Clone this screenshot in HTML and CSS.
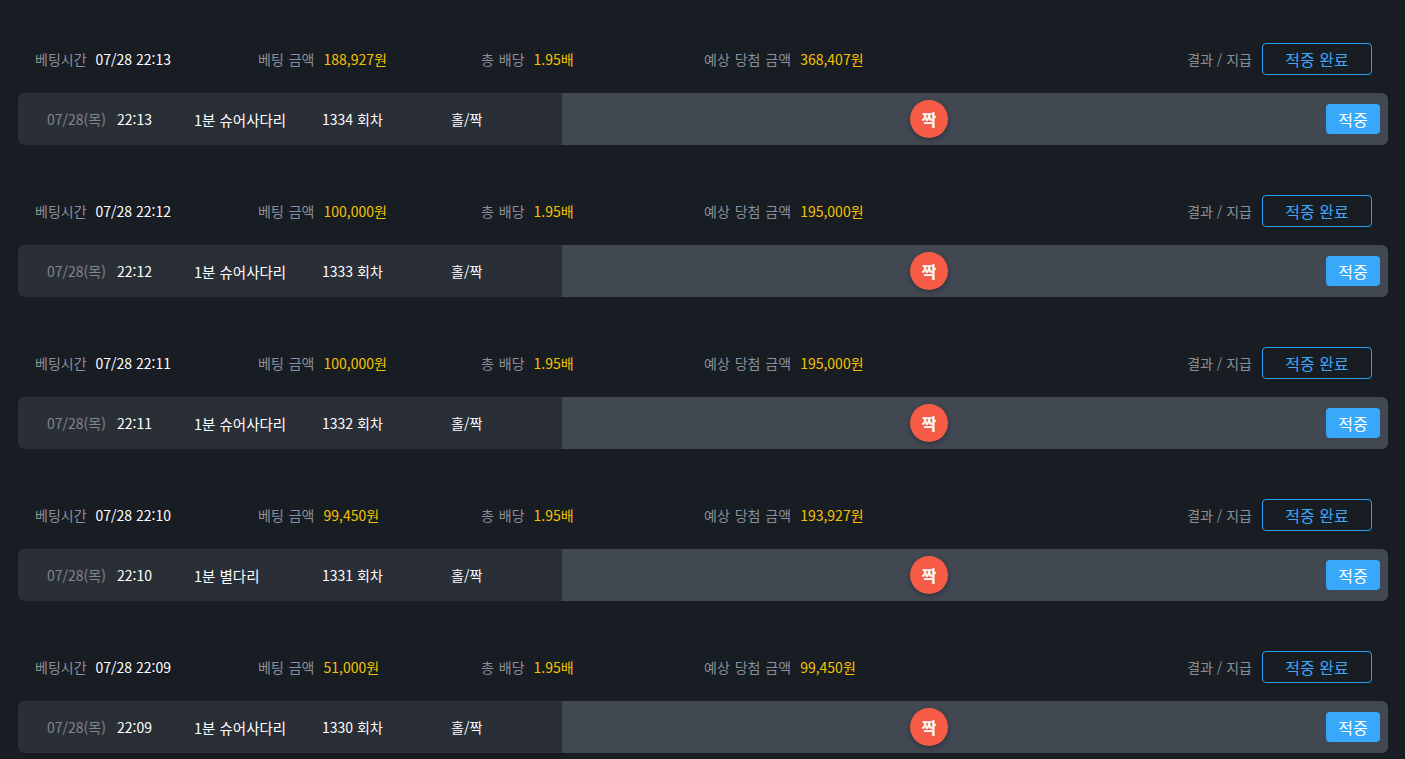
FILE: index.html
```html
<!DOCTYPE html>
<html lang="ko">
<head>
<meta charset="utf-8">
<link rel="stylesheet" href="styles.css">
</head>
<body>
<div class="list">
  <section class="bet">
    <div class="bet-head">
      <div class="col"><span class="lbl">베팅시간</span><span class="val">07/28 22:13</span></div>
      <div class="col"><span class="lbl">베팅 금액</span><span class="val gold">188,927원</span></div>
      <div class="col"><span class="lbl">총 배당</span><span class="val gold">1.95배</span></div>
      <div class="col"><span class="lbl">예상 당첨 금액</span><span class="val gold">368,407원</span></div>
      <div class="result"><span class="lbl">결과 / 지급</span><span class="done">적중 완료</span></div>
    </div>
    <div class="bet-row">
      <div class="info">
        <span class="c-date">07/28(목)</span><span class="c-time">22:13</span><span class="c-game">1분 슈어사다리</span><span class="c-round">1334 회차</span><span class="c-type">홀/짝</span>
      </div>
      <div class="pick">
        <div class="pick-center"><span class="ball">짝</span></div>
        <div class="pick-end"><span class="hit">적중</span></div>
      </div>
    </div>
  </section>
  <section class="bet">
    <div class="bet-head">
      <div class="col"><span class="lbl">베팅시간</span><span class="val">07/28 22:12</span></div>
      <div class="col"><span class="lbl">베팅 금액</span><span class="val gold">100,000원</span></div>
      <div class="col"><span class="lbl">총 배당</span><span class="val gold">1.95배</span></div>
      <div class="col"><span class="lbl">예상 당첨 금액</span><span class="val gold">195,000원</span></div>
      <div class="result"><span class="lbl">결과 / 지급</span><span class="done">적중 완료</span></div>
    </div>
    <div class="bet-row">
      <div class="info">
        <span class="c-date">07/28(목)</span><span class="c-time">22:12</span><span class="c-game">1분 슈어사다리</span><span class="c-round">1333 회차</span><span class="c-type">홀/짝</span>
      </div>
      <div class="pick">
        <div class="pick-center"><span class="ball">짝</span></div>
        <div class="pick-end"><span class="hit">적중</span></div>
      </div>
    </div>
  </section>
  <section class="bet">
    <div class="bet-head">
      <div class="col"><span class="lbl">베팅시간</span><span class="val">07/28 22:11</span></div>
      <div class="col"><span class="lbl">베팅 금액</span><span class="val gold">100,000원</span></div>
      <div class="col"><span class="lbl">총 배당</span><span class="val gold">1.95배</span></div>
      <div class="col"><span class="lbl">예상 당첨 금액</span><span class="val gold">195,000원</span></div>
      <div class="result"><span class="lbl">결과 / 지급</span><span class="done">적중 완료</span></div>
    </div>
    <div class="bet-row">
      <div class="info">
        <span class="c-date">07/28(목)</span><span class="c-time">22:11</span><span class="c-game">1분 슈어사다리</span><span class="c-round">1332 회차</span><span class="c-type">홀/짝</span>
      </div>
      <div class="pick">
        <div class="pick-center"><span class="ball">짝</span></div>
        <div class="pick-end"><span class="hit">적중</span></div>
      </div>
    </div>
  </section>
  <section class="bet">
    <div class="bet-head">
      <div class="col"><span class="lbl">베팅시간</span><span class="val">07/28 22:10</span></div>
      <div class="col"><span class="lbl">베팅 금액</span><span class="val gold">99,450원</span></div>
      <div class="col"><span class="lbl">총 배당</span><span class="val gold">1.95배</span></div>
      <div class="col"><span class="lbl">예상 당첨 금액</span><span class="val gold">193,927원</span></div>
      <div class="result"><span class="lbl">결과 / 지급</span><span class="done">적중 완료</span></div>
    </div>
    <div class="bet-row">
      <div class="info">
        <span class="c-date">07/28(목)</span><span class="c-time">22:10</span><span class="c-game">1분 별다리</span><span class="c-round">1331 회차</span><span class="c-type">홀/짝</span>
      </div>
      <div class="pick">
        <div class="pick-center"><span class="ball">짝</span></div>
        <div class="pick-end"><span class="hit">적중</span></div>
      </div>
    </div>
  </section>
  <section class="bet">
    <div class="bet-head">
      <div class="col"><span class="lbl">베팅시간</span><span class="val">07/28 22:09</span></div>
      <div class="col"><span class="lbl">베팅 금액</span><span class="val gold">51,000원</span></div>
      <div class="col"><span class="lbl">총 배당</span><span class="val gold">1.95배</span></div>
      <div class="col"><span class="lbl">예상 당첨 금액</span><span class="val gold">99,450원</span></div>
      <div class="result"><span class="lbl">결과 / 지급</span><span class="done">적중 완료</span></div>
    </div>
    <div class="bet-row">
      <div class="info">
        <span class="c-date">07/28(목)</span><span class="c-time">22:09</span><span class="c-game">1분 슈어사다리</span><span class="c-round">1330 회차</span><span class="c-type">홀/짝</span>
      </div>
      <div class="pick">
        <div class="pick-center"><span class="ball">짝</span></div>
        <div class="pick-end"><span class="hit">적중</span></div>
      </div>
    </div>
  </section>
</div>
</body>
</html>
```

FILE: styles.css
```css
* { box-sizing: border-box; }
html, body {
  margin: 0;
  padding: 0;
  background: #181c23;
  height: 100%;
  overflow: hidden;
}
body {
  font-family: "Noto Sans CJK KR", "Noto Sans", sans-serif;
  font-size: 14px;
  color: #ffffff;
}
.list {
  display: flex;
  flex-direction: column;
  gap: 50px;
  padding: 43px 17px 0 18px;
}
.bet {
  display: flex;
  flex-direction: column;
  gap: 18px;
}
.bet-head {
  display: flex;
  align-items: center;
  height: 32px;
  padding: 0 16px 0 17px;
}
.col {
  width: 223px;
  display: flex;
  align-items: center;
  gap: 9px;
  white-space: nowrap;
}
.lbl { color: #8b9099; word-spacing: 1px; }
.result .lbl { word-spacing: 0; }
.val { color: #ffffff; }
.val.gold { color: #f6c200; }
.result {
  margin-left: auto;
  display: flex;
  align-items: center;
  gap: 10px;
}
.done {
  width: 110px;
  height: 32px;
  border: 1px solid #2f9ff2;
  border-radius: 4px;
  color: #3fa7f6;
  font-size: 16px;
  display: flex;
  align-items: center;
  justify-content: center;
}
.bet-row {
  display: flex;
  height: 52px;
  border-radius: 6px;
  overflow: hidden;
}
.info {
  width: 544px;
  background: #2a2f37;
  display: flex;
  align-items: center;
  padding-left: 29px;
  white-space: nowrap;
}
.c-date { width: 70px; color: #80858e; }
.c-time { width: 77px; }
.c-game { width: 128px; font-size: 14.5px; }
.c-round { width: 129px; }
.pick {
  flex: 1;
  background: #414852;
  display: flex;
  align-items: center;
}
.pick-center {
  width: 734px;
  display: flex;
  justify-content: center;
}
.ball {
  width: 38px;
  height: 38px;
  border-radius: 50%;
  background: #f55b45;
  box-shadow: 0 2px 5px rgba(0, 0, 0, 0.3);
  color: #fff;
  font-weight: 700;
  font-size: 16px;
  display: flex;
  align-items: center;
  justify-content: center;
}
.pick-end {
  flex: 1;
  display: flex;
  justify-content: flex-end;
  padding-right: 8px;
}
.hit {
  width: 54px;
  height: 30px;
  border-radius: 4px;
  background: #38a8fa;
  color: #fff;
  font-size: 16px;
  display: flex;
  align-items: center;
  justify-content: center;
}
```
